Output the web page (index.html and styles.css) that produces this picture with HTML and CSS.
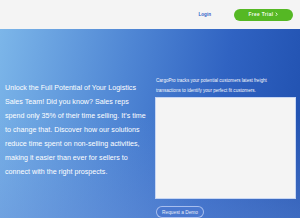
FILE: index.html
```html
<!DOCTYPE html>
<html>
<head>
<meta charset="utf-8">
<link rel="stylesheet" href="styles.css">
</head>
<body>
<header class="topbar">
  <a class="login">Login</a>
  <a class="trial">Free Trial <svg class="chev" viewBox="0 0 4 6" width="3" height="4.5"><path d="M1 0.8 L3 3 L1 5.2" fill="none" stroke="#fff" stroke-width="1.1"/></svg></a>
</header>
<section class="hero">
  <div class="left">
    <p class="pitch">Unlock the Full Potential of Your Logistics Sales Team! Did you know? Sales reps spend only 35% of their time selling. It's time to change that. Discover how our solutions reduce time spent on non-selling activities, making it easier than ever for sellers to connect with the right prospects.</p>
  </div>
  <div class="right">
    <p class="blurb">CargoPro tracks your potential customers latest freight transactions to identify your perfect fit customers.</p>
    <div class="panel"></div>
    <a class="demo">Request a Demo</a>
  </div>
</section>
</body>
</html>
```

FILE: styles.css
```css
* { box-sizing: border-box; }
html, body { margin: 0; padding: 0; }
body {
  width: 300px;
  height: 218px;
  overflow: hidden;
  font-family: "Liberation Sans", Arial, sans-serif;
  background: #f4f4f4;
}
.topbar {
  height: 29px;
  background: #f4f4f4;
  display: flex;
  align-items: center;
  justify-content: flex-end;
  padding-right: 7px;
}
.login {
  font-size: 4.6px;
  font-weight: bold;
  color: #2f5fc8;
  margin-right: 23px;
}
.trial {
  width: 59px;
  height: 12px;
  border-radius: 6px;
  background: #55b824;
  color: #f2fbec;
  font-size: 4.8px;
  font-weight: bold;
  letter-spacing: 0.35px;
  display: flex;
  align-items: center;
  justify-content: center;
}
.chev { margin-left: 2px; }
.hero {
  height: 189px;
  display: flex;
  background:
    linear-gradient(to bottom, rgba(110,150,220,0) 45%, rgba(110,150,220,0.4) 100%),
    linear-gradient(100deg, #7cb6e9 0%, #4f86d4 40%, #3063c2 70%, #1f4fae 100%);
}
.left {
  width: 150px;
  padding: 52px 4px 0 5px;
}
.pitch {
  margin: 0;
  color: #fff;
  font-size: 7.15px;
  line-height: 14px;
}
.right {
  width: 150px;
  padding: 47px 4px 0 5px;
  display: flex;
  flex-direction: column;
  align-items: flex-start;
}
.blurb {
  width: 120px;
  margin: 0 0 2px 1px;
  color: #f4f6fb;
  font-size: 4.6px;
  line-height: 9.5px;
}
.panel {
  width: 141px;
  height: 105px;
  background: #f4f4f4;
  border: 1px solid #c7d6f3;
}
.demo {
  margin: 7px 0 0 1px;
  width: 48px;
  height: 12px;
  border-radius: 6px;
  border: 1px solid rgba(190,208,245,0.8);
  background: #4a78cf;
  color: #e6ecf8;
  font-size: 4.8px;
  display: flex;
  align-items: center;
  justify-content: center;
}
```
